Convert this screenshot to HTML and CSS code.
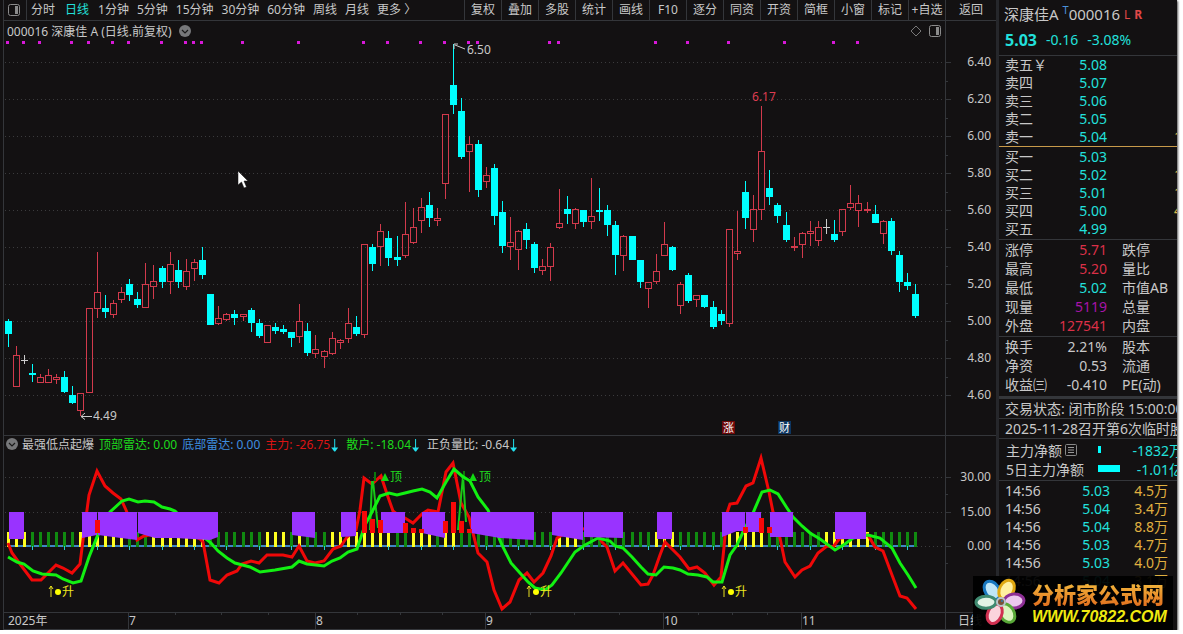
FILE: index.html
```html
<!DOCTYPE html>
<html lang="zh-CN">
<head>
	<meta charset="UTF-8">
	<meta name="viewport" content="width=device-width, initial-scale=1">
	<title>深康佳A 000016</title>
	<link rel="stylesheet" href="styles.css">
</head>
<body>

	<div class="window">
		<main class="main">
			<nav class="toolbar">
				<button class="layout-btn" aria-label="布局">
					<svg width="12" height="12"><rect x="0.5" y="0.5" width="11" height="11" rx="2" fill="none" stroke="#8b8b8b"/><rect x="7" y="2" width="3" height="8" fill="#8b8b8b"/></svg>
				</button>
				<div class="periods">
					<button>分时</button>
					<button class="active">日线</button>
					<button>1分钟</button>
					<button>5分钟</button>
					<button>15分钟</button>
					<button>30分钟</button>
					<button>60分钟</button>
					<button>周线</button>
					<button>月线</button>
					<button>更多 〉</button>
				</div>
				<div class="tools">
					<button>复权</button>
					<button>叠加</button>
					<button>多股</button>
					<button>统计</button>
					<button>画线</button>
					<button>F10</button>
					<button>逐分</button>
					<button>同资</button>
					<button>开资</button>
					<button>简框</button>
					<button>小窗</button>
					<button>标记</button>
					<button>+自选</button>
					<button class="back">返回</button>
				</div>
			</nav>

			<section class="pane">
				<div class="plot">
					<div class="pane-head">
						<span>000016 深康佳 A (日线.前复权)</span>
						<button class="drop" aria-label="展开"><svg width="12" height="12"><circle cx="6" cy="6" r="6" fill="#77787a"/><path d="M3 5l3 3 3-3" fill="none" stroke="#1a1a1a" stroke-width="1.2"/></svg></button>
						<svg class="head-icons" width="32" height="12"><path d="M6 1l5 5-5 5-5-5z" fill="none" stroke="#777"/><rect x="19.5" y="0.5" width="11" height="11" rx="2" fill="none" stroke="#8b8b8b"/><rect x="26" y="2" width="3" height="8" fill="#8b8b8b"/></svg>
					</div>
					<svg class="price" id="price"></svg>
				</div>
				<svg class="axis" id="priceAxis"></svg>
			</section>

			<section class="pane lower">
				<div class="plot">
					<div class="pane-head indicator">
						<button class="drop" aria-label="展开"><svg width="12" height="12"><circle cx="6" cy="6" r="6" fill="#77787a"/><path d="M3 5l3 3 3-3" fill="none" stroke="#1a1a1a" stroke-width="1.2"/></svg></button>
						<span>最强低点起爆</span>
						<span class="lime">顶部雷达: 0.00</span>
						<span class="blue">底部雷达: 0.00</span>
						<span class="red">主力: -26.75<i class="down"></i></span>
						<span class="lime">散户: -18.04<i class="down"></i></span>
						<span>正负量比: -0.64<i class="down"></i></span>
					</div>
					<svg class="radar" id="radar"></svg>
				</div>
				<svg class="axis" id="radarAxis"></svg>
			</section>

			<footer class="dates">
				<svg class="months" id="months"></svg>
				<span class="unit">日线</span>
			</footer>
		</main>

		<aside class="side">
			<h1>深康佳A <sup>T</sup>000016 <small>L</small> <small><b>R</b></small></h1>
			<div class="last"><strong>5.03</strong><span>-0.16</span><span>-3.08%</span></div>

			<table class="quotes sell">
				<tr><th>卖五￥</th><td>5.08</td><td></td></tr>
				<tr><th>卖四</th><td>5.07</td><td></td></tr>
				<tr><th>卖三</th><td>5.06</td><td></td></tr>
				<tr><th>卖二</th><td>5.05</td><td></td></tr>
				<tr><th>卖一</th><td>5.04</td><td class="vol">1</td></tr>
			</table>
			<table class="quotes">
				<tr><th>买一</th><td>5.03</td><td></td></tr>
				<tr><th>买二</th><td>5.02</td><td class="vol">1</td></tr>
				<tr><th>买三</th><td>5.01</td><td class="vol">1</td></tr>
				<tr><th>买四</th><td>5.00</td><td class="vol">4</td></tr>
				<tr><th>买五</th><td>4.99</td><td></td></tr>
			</table>

			<table class="quotes stats">
				<tr><th>涨停</th><td class="up">5.71</td><th>跌停</th></tr>
				<tr><th>最高</th><td class="up">5.20</td><th>量比</th></tr>
				<tr><th>最低</th><td>5.02</td><th>市值AB</th></tr>
				<tr><th>现量</th><td class="purple">5119</td><th>总量</th></tr>
				<tr><th>外盘</th><td class="up">127541</td><th>内盘</th></tr>
			</table>
			<table class="quotes stats">
				<tr><th>换手</th><td class="plain">2.21%</td><th>股本</th></tr>
				<tr><th>净资</th><td class="plain">0.53</td><th>流通</th></tr>
				<tr><th>收益㈢</th><td class="plain">-0.410</td><th>PE(动)</th></tr>
			</table>

			<div class="news">
				<p class="line">交易状态: 闭市阶段 15:00:00</p>
				<p class="line">2025-11-28召开第6次临时股东大会</p>
			</div>

			<div class="flows">
				<div class="flow"><span>主力净额<svg width="12" height="12"><rect x="0.5" y="0.5" width="11" height="11" rx="1" fill="none" stroke="#888"/><path d="M3 3.5h6M3 6h6M3 8.5h6" stroke="#999"/></svg></span><i class="bar small"></i><b>-1832万</b></div>
				<div class="flow"><span>5日主力净额</span><i class="bar"></i><b>-1.01亿</b></div>
			</div>

			<table class="ticks">
				<tr><td>14:56</td><td>5.03</td><td>4.5万</td></tr>
				<tr><td>14:56</td><td>5.04</td><td>3.4万</td></tr>
				<tr><td>14:56</td><td>5.04</td><td>8.8万</td></tr>
				<tr><td>14:56</td><td>5.03</td><td>4.7万</td></tr>
				<tr><td>14:56</td><td>5.03</td><td>4.0万</td></tr>
				<tr><td>14:56</td><td>5.04</td><td>3.1万</td></tr>
			</table>
		</aside>

		<a class="brand" href="#">
			<svg width="54" height="54" viewBox="0 0 54 54">
				<g stroke-width="3">
					<ellipse cx="27" cy="12" rx="7" ry="10" transform="rotate(-34 27 26)" fill="#bfe6f7" stroke="#1878c0"/>
					<ellipse cx="27" cy="12" rx="7" ry="10" transform="rotate(28 27 26)" fill="#fff0a0" stroke="#e0a810"/>
					<ellipse cx="27" cy="12" rx="7" ry="10" transform="rotate(86 27 26)" fill="#ecc8ee" stroke="#8e2f96"/>
					<ellipse cx="27" cy="13" rx="7" ry="10" transform="rotate(148 27 26)" fill="#dcf4c0" stroke="#58a838"/>
					<ellipse cx="27" cy="13" rx="7" ry="10" transform="rotate(204 27 26)" fill="#fbd4dc" stroke="#d03050"/>
					<ellipse cx="27" cy="12" rx="6" ry="10" transform="rotate(-91 27 26)" fill="#e2f3e6" stroke="#3f8a70"/>
				</g>
				<circle cx="28" cy="26" r="5" fill="#b9c4c9"/>
				<circle cx="28" cy="26" r="3" fill="#7a5238"/>
				<circle cx="29" cy="25" r="1" fill="#2d7fb5"/>
			</svg>
			<span class="brand-text">
				<span class="brand-name">分析家公式网</span>
				<span class="brand-url">WWW.70822.COM</span>
			</span>
		</a>

		<svg class="cursor" width="12" height="19"><path d="M1 1v14l3.500-3 2.500 6 2.500-1-2.500-6h4z" fill="#fff" stroke="#111" stroke-width="0.500"/></svg>
	</div>

	<script src="chart.js"></script>
</body>
</html>
```
FILE: styles.css
```css
* {
	box-sizing: border-box;
}
body {
	margin: 0;
	background: #fff;
	color: #c8c8c8;
	font-family: "Noto Sans", "Noto Sans CJK SC", sans-serif;
	font-size: 12px;
}
button {
	background: none;
	border: 0;
	padding: 0;
	margin: 0;
	color: inherit;
	font: inherit;
	white-space: nowrap;
	cursor: pointer;
}
svg {
	display: block;
}
.window {
	position: relative;
	display: flex;
	min-height: calc(100vh - 4px);
	margin-right: 6px;
	background: #131112;
	box-shadow: 1px 1px 2px #555;
	overflow: hidden;
}
.main {
	flex: 1;
	min-width: 0;
	margin-left: 3px;
	border-left: 1px solid #34363a;
}

/* toolbar */
.toolbar {
	display: flex;
	height: 21px;
	border-bottom: 1px solid #34363a;
	line-height: 20px;
}
.layout-btn {
	width: 23px;
	padding-left: 4px;
	border-right: 1px solid #34363a;
}
.periods {
	display: flex;
	flex: 1;
	gap: 8px;
	padding-left: 4px;
}
.periods button:nth-child(2) {
	margin: 0 1px 0 2px;
}
.active {
	color: #22e0dc;
}
.tools {
	display: flex;
}
.tools button {
	width: 37px;
	border-left: 1px solid #34363a;
}
.tools .back {
	width: 51px;
}

/* chart panes */
.pane {
	display: flex;
}
.plot {
	flex: 1;
	min-width: 0;
}
.pane-head {
	display: flex;
	align-items: center;
	gap: 7px;
	height: 19px;
	padding: 0 3px;
	white-space: nowrap;
}
.head-icons {
	margin-left: auto;
}
.price {
	width: 100%;
	height: 395px;
}
.axis {
	width: 51px;
	border-left: 1px solid #34363a;
}
.lower {
	border-top: 1px solid #34363a;
	border-bottom: 1px solid #34363a;
}
.indicator {
	height: 17px;
	gap: 5px;
	padding: 0 2px 2px;
}
.indicator .drop {
	margin-right: -1px;
}
.radar {
	width: 100%;
	height: 159px;
}
.lime {
	color: #1ddb1d;
}
.blue {
	color: #3e8fe0;
}
.red {
	color: #dc1414;
}
.down {
	display: inline-block;
	width: 7px;
	height: 13px;
	margin: 0 3px 0 1px;
	vertical-align: -3px;
	background: #22e0ee;
	clip-path: polygon(3px 0, 4px 0, 4px 9px, 7px 9px, 4px 13px, 3px 13px, 0 9px, 3px 9px);
}
.dates {
	display: flex;
	height: 17px;
	border-bottom: 1px solid #34363a;
}
.months {
	flex: 1;
	height: 16px;
}
.unit {
	width: 51px;
	padding-left: 12px;
	border-left: 1px solid #34363a;
	line-height: 16px;
}
svg text {
	fill: #c8c8c8;
	font-size: 12px;
}

/* quote panel */
.side {
	width: 181px;
	border-left: 3px solid #26272b;
	overflow: hidden;
	font-size: 14px;
	white-space: nowrap;
}
.side h1 {
	margin: 0;
	padding-left: 5px;
	height: 28px;
	font-size: 15px;
	font-weight: normal;
	line-height: 28px;
}
.side sup {
	color: #4a90d8;
	font-size: 11px;
	line-height: 11px;
}
.side small {
	color: #e04848;
	font-size: 12px;
	vertical-align: 1px;
}
.last {
	display: flex;
	align-items: center;
	gap: 9px;
	height: 28px;
	padding: 0 0 4px 6px;
	border-bottom: 1px solid #34363a;
	color: #22e0dc;
}
.last strong {
	font-size: 16px;
}
table {
	width: 100%;
	border-collapse: collapse;
	table-layout: fixed;
}
th, td {
	padding: 0;
	font-weight: normal;
	text-align: left;
}
.quotes tr {
	height: 18px;
	line-height: 18px;
}
.quotes th:first-child {
	width: 48px;
	padding-left: 6px;
}
.quotes td:nth-child(2) {
	width: 60px;
	color: #22e0dc;
	text-align: right;
}
.quotes .vol {
	padding-left: 67px;
	color: #d8b84a;
}
.sell {
	border-bottom: 1px solid #c89a4a;
	margin-bottom: 1px;
}
.stats {
	border-top: 1px solid #34363a;
	margin-top: 1px;
}
.quotes.stats tr {
	height: 19px;
	line-height: 19px;
}
.stats th:last-child {
	padding-left: 15px;
}
.quotes td.up {
	color: #dc3048;
}
.quotes td.purple {
	color: #a814a8;
}
.quotes td.plain {
	color: #c8c8c8;
}
.news {
	margin-top: 2px;
	border-top: 3px solid #34363a;
}
.line {
	height: 20px;
	margin: 0;
	padding-left: 6px;
	border-bottom: 1px solid #34363a;
	line-height: 20px;
}
.flows {
	padding: 1px 0 2px 7px;
	border-bottom: 1px solid #34363a;
}
.flow {
	display: flex;
	align-items: center;
	height: 19px;
}
.flow span {
	display: flex;
	align-items: center;
	gap: 3px;
	width: 92px;
}
.flow b {
	margin-left: auto;
	margin-right: -6px;
	color: #22e0dc;
	font-weight: normal;
}
.bar {
	width: 22px;
	height: 7px;
	background: #0ff;
}
.bar.small {
	width: 3px;
}
.ticks {
	margin-top: 1px;
}
.ticks tr {
	height: 18px;
	line-height: 18px;
}
.ticks td:first-child {
	width: 48px;
	padding-left: 6px;
}
.ticks td:nth-child(2) {
	width: 63px;
	color: #22e0dc;
	text-align: right;
}
.ticks td:last-child {
	padding-right: 9px;
	color: #e0b040;
	text-align: right;
}

/* things lying over the window */
.brand {
	position: absolute;
	right: 4px;
	bottom: 0;
	display: flex;
	align-items: center;
	gap: 5px;
	width: 200px;
	height: 54px;
	background: rgba(0, 0, 0, 0.94);
	text-decoration: none;
}
.brand-text {
	display: flex;
	flex-direction: column;
}
.brand-name {
	background: linear-gradient(#f4c040, #e06a1c);
	background-clip: text;
	color: transparent;
	font-size: 22px;
	font-weight: 900;
	line-height: 28px;
}
.brand-url {
	color: #f0ea10;
	font: italic bold 16px "Liberation Sans", sans-serif;
}
.cursor {
	position: absolute;
	left: 237px;
	top: 170px;
}
```
FILE: chart.js
```js
const BORDER = "#34363a";
const RED = "#d23a4c";
const CYAN = "#00ffff";

// kind, high, body top, body bottom, low
const candles = [
	["c",319,321,334,347],["r",346,355,387,387],["w",355,360,361,364],["c",364,373,375,382],["r",374,377,383,383],
	["r",369,375,383,383],["r",374,377,380,384],["c",371,377,392,393],["c",386,395,403,404],["r",393,393,411,416],
	["r",308,308,393,393],["r",252,292,309,318],["c",295,308,312,318],["r",300,303,315,318],["r",287,292,300,303],
	["c",279,284,295,301],["c",292,299,305,308],["r",263,284,308,308],["r",265,281,287,299],["c",266,268,282,288],
	["r",252,264,282,294],["c",260,270,282,288],["r",259,271,287,290],["r",259,262,269,281],["c",247,260,275,279],
	["c",294,294,325,325],["r",306,318,324,325],["r",313,314,320,321],["c",310,314,318,325],["r",314,314,317,321],
	["c",308,310,323,332],["c",319,323,336,338],["r",325,325,343,343],["c",323,327,331,334],["c",325,329,332,334],
	["c",332,332,338,347],["r",304,321,337,343],["c",323,331,353,356],["r",335,349,354,358],["r",350,351,357,368],
	["r",332,338,354,355],["r",339,340,343,349],["r",308,323,339,343],["c",316,327,334,336],["r",244,244,335,338],
	["c",244,247,264,271],["r",224,231,247,266],["c",231,238,258,266],["c",236,257,260,266],["r",202,234,256,258],
	["r",208,227,243,244],["r",198,207,221,233],["c",192,205,218,227],["r",208,218,221,226],["r",114,114,184,199],
	["c",44,85,105,114],["c",98,111,157,159],["r",136,144,152,192],["c",140,144,190,197],["r",167,175,182,188],
	["c",164,168,216,225],["c",201,212,246,253],["r",217,242,247,260],["r",230,231,250,270],["c",223,229,240,249],
	["c",242,244,268,273],["r",259,266,271,275],["r",243,247,267,281],["r",189,223,228,229],["c",196,209,214,224],
	["r",208,209,224,229],["c",210,210,222,227],["r",178,216,222,229],["c",188,210,212,221],["c",205,210,225,236],
	["c",221,225,255,275],["r",235,236,256,271],["c",236,236,260,260],["c",260,260,282,288],["r",282,282,289,308],
	["r",254,271,282,284],["r",222,244,256,256],["c",246,247,270,271],["r",282,284,306,314],["c",273,275,301,303],
	["r",295,295,300,307],["c",295,295,307,308],["c",301,307,327,329],["c",310,314,321,325],["r",229,229,324,327],
	["r",211,251,254,260],["c",181,192,218,229],["r",195,209,230,242],["r",106,151,210,220],["c",170,188,197,205],
	["c",203,205,216,223],["c",212,225,240,242],["r",237,246,248,251],["r",232,233,245,258],["r",221,231,234,246],
	["r",221,227,241,246],["w",219,227,228,234],["c",220,234,240,242],["r",209,209,232,236],["r",185,203,208,210],
	["r",195,203,211,227],["r",202,209,211,213],["c",205,214,223,223],["r",220,221,234,244],["c",218,221,251,255],
	["c",251,255,282,292],["c",273,282,286,290],["c",284,294,316,318]
];

// runs of yellow and green columns under the radar line
const runs = [["y",3],["g",6],["y",6],["g",3],["y",7],["g",7],["y",3],["g",1],["y",1],["g",3],["y",8],["g",2],["y",3],
	["g",1],["y",2],["g",12],["y",3],["g",9],["y",3],["g",6],["y",5],["g",7],["y",6],["g",6]];

const mainLine = "8,543 12,553 20,564 32,580 41,580 56,565 63,568 72,573 80,564 83,540 89,495 97,471 105,486 113,493 121,499 126,510 130,520 137,540 144,536 155,534 190,534 200,539 203,542 210,580 219,583 227,575 237,571 242,564 251,561 259,563 267,555 283,555 292,557 299,546 307,561 315,563 324,561 333,549 341,546 347,537 356,530 360,510 364,478 372,484 381,476 388,497 393,511 398,515 405,518 413,523 422,514 428,510 438,512 446,472 453,463 461,503 469,517 478,553 487,562 494,590 502,609 510,602 519,580 527,573 534,582 543,573 551,556 557,538 575,528 595,530 602,542 607,547 615,571 623,563 632,574 641,585 648,584 653,575 660,555 665,542 672,549 680,557 689,569 697,567 705,573 714,585 721,577 724,547 727,513 730,504 737,503 746,486 753,483 761,458 769,492 773,512 780,538 785,562 795,577 802,570 810,566 818,553 827,546 833,547 840,538 868,535 875,547 883,551 892,575 900,596 907,598 916,609";
const retailLine = "8,557 17,562 24,564 33,571 42,574 56,575 63,579 73,583 81,581 89,557 97,537 110,512 122,501 129,499 138,502 145,501 154,502 162,507 170,509 175,511 190,526 211,543 218,551 227,558 235,563 250,567 260,572 275,570 292,567 299,561 307,564 324,566 332,561 340,558 348,552 357,549 365,525 372,512 380,496 389,493 397,495 405,493 413,491 422,489 430,492 437,498 446,482 454,469 462,476 470,481 478,497 488,510 499,538 502,545 511,563 520,573 528,582 535,588 545,590 552,585 561,573 575,552 585,545 598,538 610,541 615,546 623,548 632,557 641,567 648,574 656,575 664,567 673,568 680,570 688,574 698,575 707,577 713,582 722,582 730,555 737,545 744,530 753,513 762,492 770,490 778,494 787,508 793,517 802,526 810,533 820,539 835,550 845,544 853,538 868,535 880,538 892,548 900,563 908,575 916,588";

const blocks = [
	"9,512 24,512 24,539 9,539",
	"82,512 97,512 97,535 82,538",
	"98,512 137,512 137,540 121,538 98,535",
	"138,512 218,512 218,537 210,540 175,538 155,538 138,533",
	"292,512 315,512 315,538 292,535",
	"341,512 356,512 356,536 341,537",
	"381,512 405,512 405,533 381,533",
	"422,512 445,512 445,538 422,533",
	"471,512 534,512 534,540 500,538 471,533",
	"552,512 583,512 583,540 552,535",
	"584,512 623,512 623,538 584,537",
	"657,512 672,512 672,539 657,539",
	"722,512 745,512 745,531 737,531 722,537",
	"746,512 761,512 761,532 746,532",
	"770,512 793,512 793,537 770,537",
	"835,512 866,512 866,539 835,539"
];

const spikes = [[95,520],[362,511],[370,519],[378,520],[403,523],[411,528],[419,529],[443,521],[451,502],[459,521],[467,529],[743,527],[759,518],[767,527]];
const pins = [7,23,39,71,88,112,128,161,185,193,201,242,298,363,387,420,444,468,477,549,558,655,687,728,784,833,857];

function xAt(i) {
	return 8 + Math.floor(i * 8.104 + 0.03);
}

function rect(x, y, w, h, fill) {
	return `<rect x="${x}" y="${y}" width="${w}" height="${h}" fill="${fill}" shape-rendering="crispEdges"/>`;
}

function label(x, y, text, fill, size = 12) {
	return `<text x="${x}" y="${y}" style="fill:${fill};font-size:${size}px">${text}</text>`;
}

function grid(y) {
	return `<line x1="1" x2="100%" y1="${y}.5" y2="${y}.5" stroke="#3b3b3d" stroke-dasharray="1 3"/>`;
}

function drawPrice() {
	let out = "";
	for (let y = 62; y < 400; y += 37) out += grid(y - 40);
	out += '<g transform="translate(-4 -40)">';
	pins.forEach(x => out += rect(x - 1, 41, 3, 3, "#d818d8"));
	candles.forEach(([kind, high, top, bottom, low], i) => {
		const x = xAt(i);
		if (kind === "c") {
			out += rect(x, high, 1, low - high, CYAN) + rect(x - 3, top, 7, bottom - top, CYAN);
		} else if (kind === "w") {
			out += rect(x, high, 1, low - high, "#ccc") + rect(x - 3, top, 7, 1, "#ccc");
		} else {
			out += rect(x, high, 1, top - high, RED) + rect(x, bottom, 1, low - bottom, RED);
			out += `<rect x="${x - 2.5}" y="${top + 0.5}" width="6" height="${bottom - top - 1}" fill="none" stroke="${RED}"/>`;
		}
	});
	out += '<path d="M465 49l-10-4M454 49v-5h4M92 416.500H81M85 413l-4 3.500 4 3" fill="none" stroke="#ccc"/>';
	out += label(467, 54, "6.50", "#c8c8c8") + label(93, 420, "4.49", "#c8c8c8") + label(752, 101, "6.17", "#dc3c50");
	out += rect(722, 421, 13, 13, "#6e0808") + label(723, 432, "涨", "#fff", 11);
	out += rect(778, 421, 13, 13, "#0c3560") + label(779, 432, "财", "#fff", 11);
	document.getElementById("price").innerHTML = out + "</g>";
}

function drawRadar() {
	let out = grid(24) + grid(59) + grid(93) + '<g transform="translate(-4 -453)">';
	let i = 0;
	out += rect(8, 545, 909, 2, "#3f86c4");
	runs.forEach(([kind, count]) => {
		for (let n = 0; n < count; n++, i++) {
			out += rect(xAt(i) - 1, 532, 3, 15, kind === "y" ? "#ffff20" : "#108a10");
			if (i % 4 === 3) out += rect(xAt(i), 546, 1, 4, "#28c8d0");
		}
	});
	out += `<polyline points="${mainLine}" fill="none" stroke="#f00808" stroke-width="3"/>`;
	out += '<path d="M370 530l2-49M373 481l5 47M458 530l5-54M463 476l3 46" fill="none" stroke="#18c818" stroke-width="2"/>';
	out += rect(374, 472, 2, 9, "#0c780c") + rect(463, 471, 2, 9, "#0c780c");
	out += `<polyline points="${retailLine}" fill="none" stroke="#12f012" stroke-width="3"/>`;
	blocks.forEach(points => out += `<polygon points="${points}" fill="#9933ff"/>`);
	spikes.forEach(([x, y]) => out += rect(x, y, 5, 533 - y, "#f80808"));
	[[381, 390], [469, 479]].forEach(([x, tx]) => {
		out += `<path d="M${x} 481l4-8 4 8z" fill="#12d812"/>` + label(tx, 481, "顶", "#20d820");
	});
	[[51, 58, 62], [529, 536, 540], [724, 731, 735]].forEach(([x, cx, tx]) => {
		out += `<path d="M${x} 597v-11M${x - 2} 589l2-3 2 3" fill="none" stroke="#e8e020"/>`;
		out += `<circle cx="${cx}" cy="592" r="3" fill="#ff0"/>` + label(tx, 596, "升", "#f0e820");
	});
	document.getElementById("radar").innerHTML = out + "</g>";
}

function drawAxes() {
	let out = "";
	for (let n = 0; n < 10; n++) {
		const y = 41 + n * 37;
		out += rect(0, y, 5, 1, BORDER) + (n < 9 ? rect(0, y + 19, 2, 1, BORDER) : "");
		out += `<text x="45" y="${y + 4}" text-anchor="end">${(6.4 - n * 0.2).toFixed(2)}</text>`;
	}
	document.getElementById("priceAxis").innerHTML = out;

	out = "";
	["30.00", "15.00", "0.00"].forEach((text, n) => {
		const y = Math.round(41 + n * 34.5);
		out += rect(0, y, 5, 1, BORDER) + rect(0, y + 17, 2, 1, BORDER);
		out += `<text x="45" y="${y + 4}" text-anchor="end">${text}</text>`;
	});
	document.getElementById("radarAxis").innerHTML = out;
}

function drawMonths() {
	let out = '<g transform="translate(-4 0)">' + label(8, 12, "2025年", "#c8c8c8");
	[[128, "7"], [315, "8"], [485, "9"], [663, "10"], [801, "11"]].forEach(([x, text]) => {
		out += rect(x, 0, 1, 16, BORDER) + label(x + 1, 12, text, "#c8c8c8");
	});
	[175, 221, 268, 357, 400, 442, 530, 574, 619, 698, 732, 767].forEach(x => out += rect(x, 0, 1, 2, BORDER));
	document.getElementById("months").innerHTML = out + "</g>";
}

drawPrice();
drawRadar();
drawAxes();
drawMonths();
```
